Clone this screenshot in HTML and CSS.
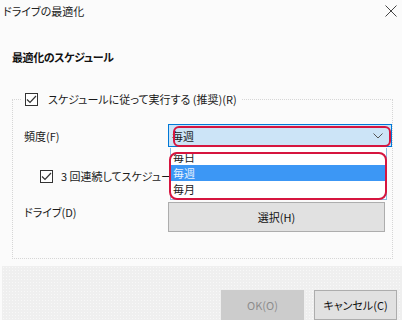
FILE: index.html
```html
<!DOCTYPE html>
<html lang="ja">
<head>
    <meta charset="UTF-8">
    <meta name="viewport" content="width=device-width, initial-scale=1.0">
    <title>ドライブの最適化</title>
    <link rel="stylesheet" href="styles.css">
</head>
<body>
    <div class="window">
        <div class="titlebar">
            <span class="title">ドライブの最適化</span>
            <svg class="close" width="12" height="12" viewBox="0 0 12 12">
                <path d="M0.5 0.5 L11.5 11.5 M11.5 0.5 L0.5 11.5" stroke="#444" stroke-width="1" fill="none"/>
            </svg>
        </div>

        <h2 class="heading">最適化のスケジュール</h2>

        <fieldset class="group">
            <legend class="group_legend">
                <span class="check"><svg width="11" height="9" viewBox="0 0 11 9"><path d="M1 4.5 L4 7.5 L10 1" stroke="#333" stroke-width="1.2" fill="none"/></svg></span>
                <span>スケジュールに従って実行する (推奨)(R)</span>
            </legend>

            <div class="group_body">
                <div class="row row_freq">
                    <span class="label">頻度(F)</span>
                    <div class="combo">
                        <span>毎週</span>
                        <svg width="10" height="6" viewBox="0 0 10 6"><path d="M0.5 0.5 L5 5 L9.5 0.5" stroke="#555" stroke-width="1" fill="none"/></svg>
                    </div>
                </div>

                <div class="row row_repeat">
                    <span class="check"><svg width="11" height="9" viewBox="0 0 11 9"><path d="M1 4.5 L4 7.5 L10 1" stroke="#333" stroke-width="1.2" fill="none"/></svg></span>
                    <span class="repeat_text">3 回連続してスケジュールされた実行が行われなかった場合に通知する</span>
                </div>

                <div class="row row_drive">
                    <span class="label">ドライブ(D)</span>
                    <button class="btn btn_select">選択(H)</button>
                </div>
            </div>
        </fieldset>

        <div class="footer">
            <button class="btn btn_ok" disabled>OK(O)</button>
            <button class="btn">キャンセル(C)</button>
        </div>

        <!-- open dropdown list, drawn over the dialog -->
        <ul class="dropdown">
            <li>毎日</li>
            <li class="selected">毎週</li>
            <li>毎月</li>
        </ul>

        <!-- red highlight marks -->
        <div class="mark mark_combo"></div>
        <div class="mark mark_list"></div>
    </div>
</body>
</html>
```

FILE: styles.css
```css
body{
    margin: 0px;
    padding: 0px;
    background-color: #fbfbfb;
    font-family: "Noto Sans CJK JP", "Noto Sans", sans-serif;
    font-feature-settings: "palt";
    font-size: 11px;
    color: #1a1a1a;
}
.window{
    position: relative;
    width: 402px;
    height: 320px;
    overflow: hidden;
    display: flex;
    flex-direction: column;
}

.titlebar{
    height: 22px;
    display: flex;
    align-items: center;
    justify-content: space-between;
    padding: 0px 5px 0px 3px;
}
.title{
    font-size: 11px;
    color: #222;
}
.close{
    margin-top: 1px;
}

.heading{
    margin: 28px 0px 0px 12px;
    font-size: 11px;
    line-height: 16px;
    font-weight: 700;
    letter-spacing: -0.4px;
    color: #111;
}

.group{
    margin: 26px 9px 0px 12px;
    padding: 0px;
    border: 1px dotted #d6d6d6;
    min-width: 0px;
}
.group_legend{
    margin-left: 8px;
    padding: 0px 4px;
    display: flex;
    align-items: center;
    gap: 10px;
    line-height: 16px;
}
.check{
    width: 11px;
    height: 11px;
    border: 1px solid #333;
    display: flex;
    align-items: center;
    justify-content: center;
    background-color: white;
    flex-shrink: 0;
}

.group_body{
    padding: 17px 0px 26px 11px;
}
.row{
    display: flex;
    align-items: center;
}
.label{
    width: 145px;
    flex-shrink: 0;
}
.row_freq{
    height: 23px;
}
.combo{
    width: 217px;
    height: 21px;
    border: 1px solid #0078d7;
    background-color: #cce4f7;
    display: flex;
    align-items: center;
    justify-content: space-between;
    padding: 0px 8px 0px 3px;
    box-sizing: content-box;
    margin-left: -1px;
}

.row_repeat{
    margin-top: 21px;
    margin-left: 16px;
    gap: 8px;
    white-space: nowrap;
    line-height: 16px;
}
/* the rest of this line is hidden under the open list */
.repeat_text{
    width: 109px;
    overflow: hidden;
}

.row_drive{
    margin-top: 18px;
    align-items: flex-start;
}
.row_drive .label{
    padding-top: 2px;
}

.btn{
    font-family: "Noto Sans CJK JP", "Noto Sans", sans-serif;
    font-feature-settings: "palt";
    font-size: 11px;
    color: #111;
    background-color: #e1e1e1;
    border: 1px solid #adadad;
    padding: 0px;
}
.btn_select{
    width: 217px;
    height: 30px;
    margin-left: -1px;
}

.footer{
    margin-top: 7px;
    flex: 1;
    margin-left: 2px;
    background-color: #efefef;
    background-image: radial-gradient(#f8f8f8 0.6px, transparent 0.9px);
    background-size: 3px 3px;
    display: flex;
    justify-content: flex-end;
    align-items: flex-start;
    gap: 10px;
    padding: 24px 5px 0px 0px;
}
.footer .btn{
    width: 83px;
    height: 30px;
}
.btn_ok{
    background-color: #cccccc;
    border-color: #cccccc;
    color: #8c8c8c;
}

.dropdown{
    position: absolute;
    left: 170px;
    top: 148px;
    width: 215px;
    height: 50px;
    margin: 0px;
    padding: 1px 0px 0px 0px;
    list-style: none;
    background-color: white;
    border: 1px solid #8fb8de;
    border-top: none;
}
.dropdown li{
    height: 16px;
    line-height: 16px;
    padding-left: 2px;
}
.dropdown .selected{
    background-color: #3c97f5;
    color: #e8f2fd;
}

.mark{
    position: absolute;
    border: 2px solid #d6153f;
}
.mark_combo{
    left: 173px;
    top: 126px;
    width: 214px;
    height: 17px;
    border-radius: 6px;
}
.mark_list{
    left: 169px;
    top: 152px;
    width: 214px;
    height: 44px;
    border-radius: 8px;
}
```
